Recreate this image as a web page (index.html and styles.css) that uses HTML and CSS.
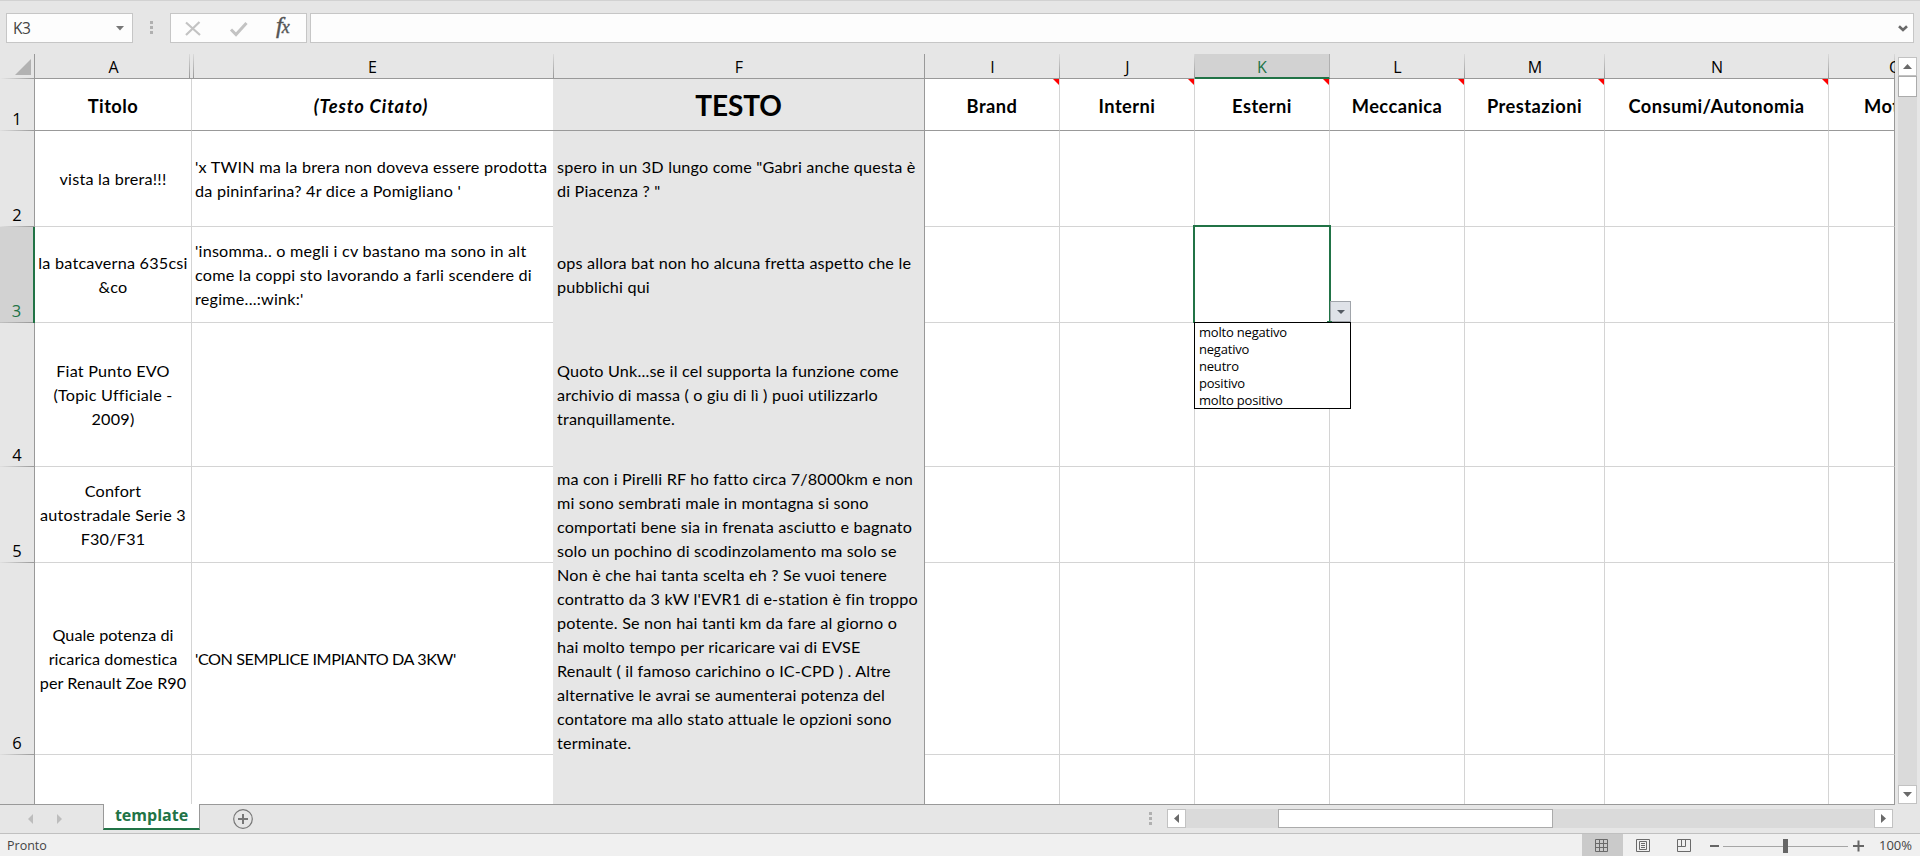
FILE: index.html
```html
<!DOCTYPE html>
<html lang="it">
<head>
<meta charset="utf-8">
<title>template</title>
<link rel="stylesheet" href="styles.css">
</head>
<body>
<div class="app">
  <div class="formula-bar">
    <div class="name-box"><span>K3</span><svg width="8" height="5"><path d="M0 0h8L4 4.6z" fill="#777"/></svg></div>
    <div class="dots"><i></i><i></i><i></i></div>
    <div class="fx-box">
      <svg width="137" height="29" viewBox="0 0 137 29">
        <path d="M15 8.500l14 12.500M28.500 8L15 21" fill="none" stroke="#c3c3c3" stroke-width="2.200"/>
        <path d="M60 15.500l5 5L75.500 9" fill="none" stroke="#c3c3c3" stroke-width="3"/>
      </svg>
      <span class="fx"><b>f</b><small>x</small></span>
    </div>
    <div class="formula-input"><svg width="10" height="7"><path d="M1 1.200l4 3.800 4-3.800" fill="none" stroke="#6a6a6a" stroke-width="2.600"/></svg></div>
  </div>

  <div class="main">
    <div class="sheet">
      <div class="ch corner"><svg width="16" height="16"><path d="M16 0v16H0z" fill="#b2b2b2"/></svg></div>
      <div class="ch hidden-cols">A</div><div class="ch">E</div><div class="ch ch-f">F</div><div class="ch">I</div><div class="ch">J</div><div class="ch active">K</div><div class="ch">L</div><div class="ch">M</div><div class="ch">N</div><div class="ch last-h">O</div>

      <div class="rh first">1</div>
      <div class="c head a">Titolo</div><div class="c head e"><em>(Testo Citato)</em></div><div class="c head f"><span class="big">TESTO</span></div><div class="c head note">Brand</div><div class="c head note">Interni</div><div class="c head note">Esterni</div><div class="c head note">Meccanica</div><div class="c head note">Prestazioni</div><div class="c head note">Consumi/Autonomia</div><div class="c head last">Motori</div>

      <div class="rh">2</div>
      <div class="c a">vista la brera!!!</div><div class="c e">'x TWIN ma la brera non doveva essere prodotta<br>da pininfarina? 4r dice a Pomigliano '</div><div class="c f">spero in un 3D lungo come "Gabri anche questa è<br>di Piacenza ? "</div><div class="c"></div><div class="c"></div><div class="c"></div><div class="c"></div><div class="c"></div><div class="c"></div><div class="c last"></div>

      <div class="rh active">3</div>
      <div class="c a">la batcaverna 635csi<br>&amp;co</div><div class="c e">'insomma.. o megli i cv bastano ma sono in alt<br>come la coppi sto lavorando a farli scendere di<br>regime...:wink:'</div><div class="c f">ops allora bat non ho alcuna fretta aspetto che le<br>pubblichi qui</div><div class="c"></div><div class="c"></div>
      <div class="c selected">
        <div class="outline"></div>
        <div class="drop-btn"><svg width="8" height="4"><path d="M0 0h8L4 4z" fill="#555b63"/></svg></div>
        <div class="handle"></div>
        <ul class="list"><li>molto negativo</li><li>negativo</li><li>neutro</li><li>positivo</li><li>molto positivo</li></ul>
      </div>
      <div class="c"></div><div class="c"></div><div class="c"></div><div class="c last"></div>

      <div class="rh">4</div>
      <div class="c a">Fiat Punto EVO<br>(Topic Ufficiale -<br>2009)</div><div class="c e"></div><div class="c f">Quoto Unk...se il cel supporta la funzione come<br>archivio di massa ( o giu di lì ) puoi utilizzarlo<br>tranquillamente.</div><div class="c"></div><div class="c"></div><div class="c"></div><div class="c"></div><div class="c"></div><div class="c"></div><div class="c last"></div>

      <div class="rh">5</div>
      <div class="c a">Confort<br>autostradale Serie 3<br>F30/F31</div><div class="c e"></div><div class="c f">ma con i Pirelli RF ho fatto circa 7/8000km e non<br>mi sono sembrati male in montagna si sono<br>comportati bene sia in frenata asciutto e bagnato<br>solo un pochino di scodinzolamento ma solo se</div><div class="c"></div><div class="c"></div><div class="c"></div><div class="c"></div><div class="c"></div><div class="c"></div><div class="c last"></div>

      <div class="rh">6</div>
      <div class="c a tight">Quale potenza di<br>ricarica domestica<br>per Renault Zoe R90</div><div class="c e caps">'CON SEMPLICE IMPIANTO DA 3KW'</div><div class="c f">Non è che hai tanta scelta eh ? Se vuoi tenere<br>contratto da 3 kW l'EVR1 di e-station è fin troppo<br>potente. Se non hai tanti km da fare al giorno o<br>hai molto tempo per ricaricare vai di EVSE<br>Renault ( il famoso carichino o IC-CPD ) . Altre<br>alternative le avrai se aumenterai potenza del<br>contatore ma allo stato attuale le opzioni sono<br>terminate.</div><div class="c"></div><div class="c"></div><div class="c"></div><div class="c"></div><div class="c"></div><div class="c"></div><div class="c last"></div>

      <div class="rh end"></div>
      <div class="c a end"></div><div class="c e end"></div><div class="c f"></div><div class="c end"></div><div class="c end"></div><div class="c end"></div><div class="c end"></div><div class="c end"></div><div class="c end"></div><div class="c last end"></div>
    </div>
    <div class="vscroll">
      <div class="sb-btn"><svg width="9" height="5"><path d="M0 5h9L4.500 0z" fill="#6a6a6a"/></svg></div>
      <div class="v-thumb"></div>
      <div class="v-track"></div>
      <div class="sb-btn"><svg width="9" height="5"><path d="M0 0h9L4.500 5z" fill="#6a6a6a"/></svg></div>
    </div>
  </div>

  <div class="tab-bar">
    <div class="nav"><svg width="5" height="10"><path d="M5 0v10L0 5z" fill="#bdbdbd"/></svg><svg width="5" height="10"><path d="M0 0v10L5 5z" fill="#bdbdbd"/></svg></div>
    <div class="tab">template</div>
    <svg class="add" width="20" height="20"><circle cx="10" cy="10" r="9.300" fill="none" stroke="#777" stroke-width="1.200"/><path d="M5 10h10M10 5v10" stroke="#777" stroke-width="2"/></svg>
    <div class="dots tab-dots"><i></i><i></i><i></i></div>
    <div class="hscroll">
      <div class="sb-btn"><svg width="5" height="9"><path d="M5 0v9L0 4.500z" fill="#6a6a6a"/></svg></div>
      <div class="h-gap"></div><div class="h-thumb"></div><div class="h-track"></div>
      <div class="sb-btn"><svg width="5" height="9"><path d="M0 0v9l5-4.500z" fill="#6a6a6a"/></svg></div>
    </div>
  </div>

  <div class="status">
    <span class="ready">Pronto</span>
    <div class="view on"><svg width="13" height="13"><path d="M.5.500h12v12H.5zM4.500 0v13M8.500 0v13M0 4.500h13M0 8.500h13" fill="none" stroke="#6a6a6a"/></svg></div>
    <div class="view"><svg width="14" height="13"><path d="M.5.500h13v12H.5zM3.500 2.500h7v8h-7zM5 4.500h4M5 6.500h4M5 8.500h4" fill="none" stroke="#6a6a6a"/></svg></div>
    <div class="view"><svg width="14" height="13"><path d="M.5.500h13v12H.5zM.5 7.500h8v-7M4.500.500v7" fill="none" stroke="#6a6a6a"/></svg></div>
    <svg class="zoom" width="154" height="22"><path d="M0 12h9M143 12h11M148.500 6.500v11" stroke="#666" stroke-width="2"/><path d="M13 12.500h125" stroke="#a6a6a6"/><path d="M73 5h5v14h-5z" fill="#666"/></svg>
    <span class="pct">100%</span>
  </div>
</div>
</body>
</html>
```
FILE: styles.css
```css
* { box-sizing: border-box; }
body { margin: 0; background: #e6e6e6; font-family: "Open Sans", "Noto Sans", sans-serif; color: #000; overflow: hidden; }
svg { display: block; flex: none; }
.app { width: 1920px; height: 856px; display: flex; flex-direction: column; }

.formula-bar { height: 54px; border-top: 1px solid #d2d2d2; padding: 12px 6px 0; display: flex; align-items: flex-start; }
.name-box, .fx-box, .formula-input { height: 30px; background: #fdfdfd; border: 1px solid #c6c6c6; display: flex; align-items: center; }
.name-box { width: 127px; justify-content: space-between; padding: 0 8px 0 6px; font-size: 15.500px; letter-spacing: -.5px; color: #444; }
.dots { width: 3px; display: flex; flex-direction: column; gap: 2px; }
.dots i { width: 3px; height: 3px; background: #b0b0b0; }
.formula-bar .dots { margin: 8px 17px 0; }
.fx-box { width: 137px; position: relative; }
.fx { position: absolute; left: 105px; top: -3px; font-family: "Liberation Serif", serif; font-style: italic; color: #555; line-height: 29px; }
.fx b { font-size: 24px; font-weight: 400; -webkit-text-stroke: .4px #555; }
.fx small { font-size: 18px; margin-left: -1px; -webkit-text-stroke: .4px #555; }
.formula-input { flex: 1; margin-left: 3px; justify-content: flex-end; padding-right: 5px; }

.main { height: 750px; display: flex; }
.sheet { width: 1895px; display: grid; overflow: hidden; background: #fff;
  grid-template-columns: 35px 157px 361px 372px 135px 135px 135px 135px 140px 224px 66px;
  grid-template-rows: 25px 52px 96px 96px 144px 96px 192px 49px; }
.ch { background: linear-gradient(to bottom, #dadada, #999) right / 1px 100% no-repeat, #e6e6e6; border-bottom: 1px solid #999; font-size: 16px; line-height: 27px; text-align: center; min-width: 0; }
.ch.corner { background: linear-gradient(#999, #999) right / 1px 100% no-repeat, linear-gradient(to right, #e6e6e6, #999) bottom / 100% 1px no-repeat, #e6e6e6; border-bottom: 0; padding: 5px 4px 0 15px; }
.hidden-cols { background: linear-gradient(to bottom, #dadada, #999) 154px 0 / 1px 100% no-repeat, #e6e6e6; }
.hidden-cols + .ch { background: linear-gradient(to bottom, #dadada, #999) 1px 0 / 1px 100% no-repeat, #e6e6e6; }
.ch.ch-f { background: linear-gradient(to bottom, #dadada, #999) left / 1px 100% no-repeat, linear-gradient(#999, #999) right / 1px 100% no-repeat, #e6e6e6; }
.ch.active { background: #d2d2d2; color: #217346; border-bottom: 2px solid #217346; border-right: 1px solid #b0b0b0; }
.ch.last-h { text-align: left; padding-left: 60px; overflow: hidden; }
.rh { background: linear-gradient(to right, #e0e0e0, #999) bottom / 100% 1px no-repeat, #e6e6e6; border-right: 1px solid #999; font-size: 16.500px; line-height: 20px; display: flex; align-items: flex-end; justify-content: center; padding-bottom: 2px; }
.rh.active { background: linear-gradient(to right, #c0c0c0, #999) bottom / 100% 1px no-repeat, #d2d2d2; color: #217346; border-right: 2px solid #217346; }
.rh.end { background: #e6e6e6; }

.c { border-right: 1px solid #d4d4d4; border-bottom: 1px solid #d4d4d4; font: 16.200px/24px Lato, sans-serif; letter-spacing: .22px; white-space: nowrap; display: flex; align-items: center; min-width: 0; position: relative; }
.c.a { justify-content: center; text-align: center; }
.c.e { border-right: 0; padding-left: 3px; }
.c.f { background: #e6e6e6; border-right-color: #999; border-bottom: 0; padding-left: 4px; letter-spacing: .17px; }
.c.tight { letter-spacing: .05px; }
.c.caps { letter-spacing: -.42px; }
.c.last { border-right-color: #999; overflow: hidden; }
.c.end { border-bottom: 0; }
.c.head { border-bottom: 1px solid #999; justify-content: center; font-weight: 700; font-size: 18.300px; letter-spacing: .45px; padding: 2px 0 0; }
.c.head em { letter-spacing: .9px; margin-right: 3px; }
.c.head.last { justify-content: flex-start; padding-left: 35px; }
.c .big { font-size: 28px; letter-spacing: -.1px; margin-top: -2px; }
.note::after { content: ""; position: absolute; right: 0; top: 0; width: 6px; height: 6px; background: #f00; clip-path: polygon(0 0, 100% 0, 100% 100%); }

.selected { z-index: 2; }
.outline { position: absolute; left: -2px; top: -2px; width: 138px; height: 98px; border: 2px solid #217346; border-bottom: 0; }
.drop-btn { position: absolute; left: 135px; top: 74px; width: 21px; height: 21px; background: #dfe2e8; border: 1px solid #a0a4aa; display: flex; align-items: center; justify-content: center; }
.handle { position: absolute; left: 132px; top: 94px; width: 5px; height: 2px; background: #217346; }
.list { position: absolute; left: -1px; top: 95px; width: 157px; height: 87px; margin: 0; padding: 1px 0 0 4px; border: 1px solid #000; background: #fff; list-style: none; font: 13px/17px "Open Sans", "Noto Sans", sans-serif; letter-spacing: -.2px; }

.vscroll { width: 18px; margin: 3px 0 0 3px; display: flex; flex-direction: column; }
.sb-btn { width: 19px; height: 19px; flex: none; background: #fff; border: 1px solid #c2c2c2; display: flex; align-items: center; justify-content: center; }
.v-thumb { width: 19px; height: 21px; background: #fff; border: 1px solid #ababab; }
.v-track { width: 19px; flex: 1; background: #dadada; }

.tab-bar { height: 29px; display: flex; align-items: flex-start; background: linear-gradient(#999, #999) 0 0 / 1895px 1px no-repeat, #e6e6e6; }
.nav { width: 103px; padding: 10px 0 0 28px; display: flex; gap: 24px; }
.tab { width: 97px; height: 26px; background: #fff; border: solid #999; border-width: 0 1px; border-bottom: 2px solid #217346; color: #217346; font-weight: 700; font-size: 16px; line-height: 22px; text-align: center; }
.add { margin: 5px 0 0 33px; }
.tab-dots { margin: 8px 15px 0 896px; }
.hscroll { width: 726px; padding-top: 5px; display: flex; }
.h-gap { width: 92px; height: 19px; background: #dadada; }
.h-thumb { width: 275px; height: 19px; background: #fff; border: 1px solid #ababab; }
.h-track { flex: 1; height: 19px; background: #dadada; }

.status { height: 23px; background: #f0f0f0; border-top: 1px solid #c0c0c0; display: flex; align-items: center; font-size: 12.500px; color: #444; }
.ready { width: 1582px; padding-left: 7px; }
.view { width: 41px; height: 22px; padding-right: 2px; display: flex; align-items: center; justify-content: center; }
.view.on { background: #cacaca; }
.zoom { margin-left: 5px; }
.pct { margin-left: 15px; font-size: 13px; }
```
